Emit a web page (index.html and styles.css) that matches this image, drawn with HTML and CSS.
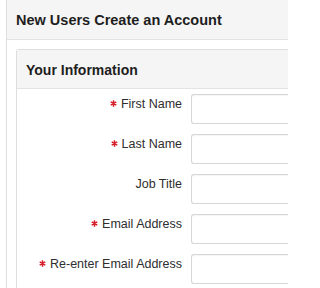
FILE: index.html
```html
<!DOCTYPE html>
<html>
<head>
<meta charset="utf-8">
<link rel="stylesheet" href="styles.css">
</head>
<body>
<div class="panel">
  <div class="panel-head">New Users Create an Account</div>
  <div class="panel-body">
    <div class="section">
      <div class="section-head">Your Information</div>
      <form class="form">
        <div class="row">
          <label class="label"><svg class="req" viewBox="0 0 6 6"><path d="M3 0.2V5.8M0.6 1.6L5.4 4.4M0.6 4.4L5.4 1.6"/></svg>First Name</label>
          <input class="input" type="text">
        </div>
        <div class="row">
          <label class="label"><svg class="req" viewBox="0 0 6 6"><path d="M3 0.2V5.8M0.6 1.6L5.4 4.4M0.6 4.4L5.4 1.6"/></svg>Last Name</label>
          <input class="input" type="text">
        </div>
        <div class="row">
          <label class="label">Job Title</label>
          <input class="input" type="text">
        </div>
        <div class="row">
          <label class="label"><svg class="req" viewBox="0 0 6 6"><path d="M3 0.2V5.8M0.6 1.6L5.4 4.4M0.6 4.4L5.4 1.6"/></svg>Email Address</label>
          <input class="input" type="text">
        </div>
        <div class="row">
          <label class="label"><svg class="req" viewBox="0 0 6 6"><path d="M3 0.2V5.8M0.6 1.6L5.4 4.4M0.6 4.4L5.4 1.6"/></svg>Re-enter Email Address</label>
          <input class="input" type="text">
        </div>
      </form>
    </div>
  </div>
</div>
</body>
</html>
```
FILE: styles.css
```css
html, body {
  margin: 0;
  padding: 0;
  width: 288px;
  height: 288px;
  overflow: hidden;
  background: #fff;
}
body {
  font-family: "Liberation Sans", Arial, sans-serif;
  color: #333;
}
.panel {
  margin-left: 6px;
  border-left: 1px solid #dedede;
}
.panel-head {
  height: 39px;
  line-height: 41px;
  padding-left: 9px;
  background: #f5f5f5;
  border-bottom: 1px solid #e3e3e3;
  font-weight: bold;
  font-size: 14.5px;
  color: #1e1e1e;
}
.panel-body {
  padding: 9px 0 0 9px;
}
.section {
  border: 1px solid #dedede;
  border-right: none;
  border-bottom: none;
  border-radius: 3px 0 0 0;
}
.section-head {
  height: 38px;
  line-height: 40px;
  padding-left: 9px;
  background: #f5f5f5;
  border-bottom: 1px solid #e3e3e3;
  font-weight: bold;
  font-size: 14px;
  color: #1e1e1e;
}
.form {
  margin: 0;
  padding: 5px 0 4px;
  display: flex;
  flex-direction: column;
  gap: 10px;
}
.row {
  display: flex;
  gap: 9px;
}
.label {
  width: 165px;
  flex: none;
  text-align: right;
  font-size: 12.5px;
  line-height: 17px;
  padding-top: 2px;
  color: #2e2e2e;
}
.req {
  width: 7px;
  height: 7px;
  margin-right: 4px;
  vertical-align: 1px;
  stroke: #d81e2a;
  stroke-width: 1.3;
  fill: none;
}
.input {
  box-sizing: border-box;
  flex: 1;
  min-width: 0;
  height: 30px;
  margin: 0;
  border: 1px solid #d6d6d6;
  border-right: none;
  border-radius: 3px 0 0 3px;
  background: #fff;
  box-shadow: inset 0 1px 1px rgba(0,0,0,0.04);
}
```
